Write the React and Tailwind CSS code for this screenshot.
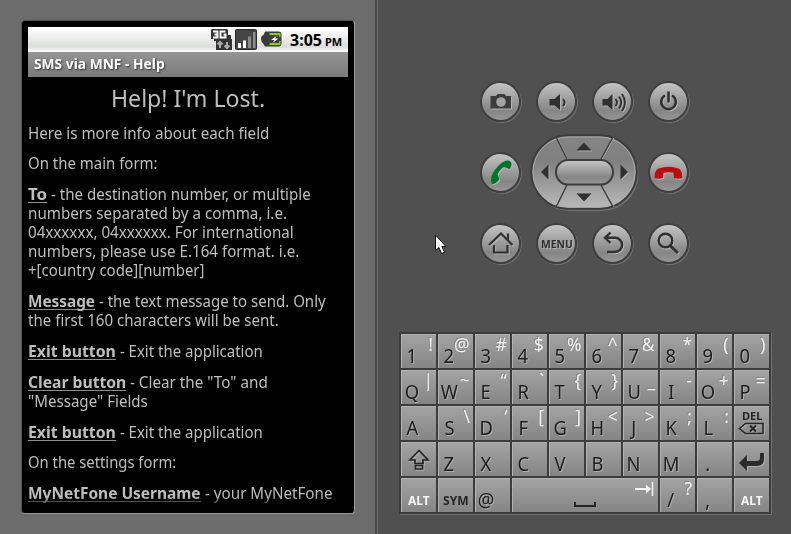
import React, { useLayoutEffect, useRef, useState } from "react";

// Text squeezed or stretched horizontally to an exact width.
function Fit({ w, className = "", children }) {
  const ref = useRef(null);
  const [scale, setScale] = useState(1);
  useLayoutEffect(() => {
    setScale(w / ref.current.offsetWidth);
  }, [w]);
  return (
    <span
      ref={ref}
      className={"inline-block w-max origin-left whitespace-pre " + className}
      style={{ transform: `scaleX(${scale})` }}
    >
      {children}
    </span>
  );
}

function Line({ term, termW, text, w }) {
  return (
    <div className="flex h-[19px]">
      {term && (
        <span className="flex h-[18px] shrink-0 border-b border-[#8f8f8f]" style={{ width: termW }}>
          <Fit w={termW} className="font-bold">{term}</Fit>
        </span>
      )}
      <Fit w={w}>{text}</Fit>
    </div>
  );
}

function StatusBar() {
  return (
    <div className="flex h-[25px] items-center bg-linear-to-b from-white via-[#dcdedc] via-80% to-white pl-[183px]">
      <svg width="72" height="24" viewBox="0 0 72 24">
        <path d="M1 1h15l1 1v5h3v4h1v11H5v-9H3v-2H0V2z" fill="#333" />
        <path d="M2 3.500h4.500v6H2M3.500 6.500h3M14.500 3.500H9.500v6h5v-3h-2" fill="none" stroke="#fff" strokeWidth="1.900" />
        <path d="M9 20v-5M6.500 16.500L9 14l2.500 2.500M16 14v5M13.500 17.500L16 20l2.500-2.500" fill="none" stroke="#aaa" strokeWidth="2" />
        <rect x="24.500" y="1.500" width="21" height="20" rx="1" fill="#454545" stroke="#2a2a2a" />
        <path d="M27 15h3v5h-3zM32 12.500h3V20h-3z" fill="#fff" />
        <path d="M37 8.500h3V20h-3zM42 4h2.500v16H42z" fill="#8b8b8b" />
        <path d="M54 3.500h13.500q3 0 3 3v9q0 3-3 3H54l-1.500-2.500q-2.500-1.500-2.500-5t2.500-4z" fill="#3b3d3b" />
        <path d="M58.500 5h10.500v2h-10.500zM58.500 15h10.500v2h-10.500zM68 5h1.500v4h-1.500zM68 13h1.500v4h-1.500z" fill="#8fd000" />
        <path d="M66 7.500l-6 4.500h3.500l-2 3 6-4.500h-3.500z" fill="#fff" />
      </svg>
      <span className="flex items-baseline pl-[7px] pt-[2px] font-bold text-black">
        <Fit w={32} className="text-[16px] leading-5">3:05</Fit>
        <Fit w={17} className="ml-[3px] text-[11px] leading-5">PM</Fit>
      </span>
    </div>
  );
}

function Phone() {
  return (
    <div className="flex h-[494px] w-[334px] flex-col overflow-hidden rounded-[4px] border border-t-[#555] border-r-[#999] border-b-[#999] border-l-[#555] bg-black p-[6px]">
      <StatusBar />
      <div className="flex h-[25px] items-center bg-linear-to-b from-[#959595] to-[#7a7a7a] pl-[6px] text-[14px] font-bold text-white [text-shadow:1px_1px_2px_#333]">
        <Fit w={131} className="-mt-[2px]">SMS via MNF - Help</Fit>
      </div>
      <div className="grid h-[430px] grid-cols-1 grid-rows-1 overflow-hidden text-[16px] leading-[19px] text-[#bebebe]">
        <div className="col-start-1 row-start-1 flex flex-col">
          <div className="flex h-[47px] pl-[83px] text-[24px] leading-[41px]">
            <Fit w={154}>Help! I'm Lost.</Fit>
          </div>
          <Line text="Here is more info about each field" w={241} />
          <div className="h-[11px]" />
          <Line text="On the main form:" w={130} />
          <div className="h-3" />
          <Line term="To" termW={19} text=" - the destination number, or multiple" w={264} />
          <Line text="numbers separated by a comma, i.e." w={259} />
          <Line text="04xxxxxx, 04xxxxxx. For international" w={266} />
          <Line text="numbers, please use E.164 format. i.e." w={271} />
          <Line text="+[country code][number]" w={176} />
          <div className="h-3" />
          <Line term="Message" termW={67} text=" - the text message to send. Only" w={231} />
          <Line text="the first 160 characters will be sent." w={251} />
          <div className="h-3" />
          <Line term="Exit button" termW={88} text=" - Exit the application" w={147} />
          <div className="h-3" />
          <Line term="Clear button" termW={98} text={' - Clear the "To" and'} w={142} />
          <Line text={'"Message" Fields'} w={120} />
          <div className="h-3" />
          <Line term="Exit button" termW={88} text=" - Exit the application" w={147} />
          <div className="h-[11px]" />
          <Line text="On the settings form:" w={148} />
          <div className="h-3" />
          <Line term="MyNetFone Username" termW={173} text=" - your MyNetFone" w={132} />
        </div>
        <div className="z-10 col-start-1 row-start-1 h-[10px] self-end bg-linear-to-b from-transparent to-black" />
      </div>
    </div>
  );
}

function Round({ children }) {
  return (
    <div className="flex size-[41px] items-center justify-center rounded-full border-2 border-[#3f3f3f] bg-linear-to-b from-[#c4c4c4] via-[#858585] via-75% to-[#979797] shadow-[1px_1px_0_#717171] [&>svg]:shrink-0 [&>svg]:drop-shadow-[1px_1px_0_#b5b5b5]">
      {children}
    </div>
  );
}

const S = { fill: "none", stroke: "#303030" };

function DPad() {
  return (
    <svg width="110" height="78" viewBox="530.500 134 110 78">
      <defs>
        <linearGradient id="pad" x1="0" y1="0" x2="0" y2="1">
          <stop offset="0" stopColor="#858585" />
          <stop offset="0.35" stopColor="#808080" />
          <stop offset="1" stopColor="#bababa" />
        </linearGradient>
        <linearGradient id="mid" x1="0" y1="0" x2="0" y2="1">
          <stop offset="0" stopColor="#c8c8c8" />
          <stop offset="0.7" stopColor="#868686" />
          <stop offset="1" stopColor="#979797" />
        </linearGradient>
      </defs>
      <rect x="533" y="136.500" width="106" height="74.500" rx="37" fill="#717171" />
      <rect x="531.800" y="135.300" width="105.500" height="73.500" rx="36.700" fill="url(#pad)" stroke="#3c3c3c" strokeWidth="2" />
      <rect x="533.500" y="137" width="102" height="70" rx="35" fill="none" stroke="#b0b0b0" strokeWidth="0.800" />
      <path d="M557.500 137.500L568.500 159.500M614.500 137.500L602.500 159.500M557.500 207L568.500 185M614.500 207L602.500 185" stroke="#a9a9a9" strokeWidth="1" />
      <path d="M556.500 137L567.500 159M613.500 137L601.500 159M556.500 207L567.500 185M613.500 207L601.500 185" stroke="#404040" strokeWidth="1.500" />
      <rect x="556.500" y="160" width="57" height="24.500" rx="12.200" fill="url(#mid)" stroke="#3c3c3c" strokeWidth="2" />
      <g fill="#b0b0b0">
        <path d="M578 151.500h15l-7.500-8zM578 194.500h15l-7.500 8zM550 165.500v15l-7.500-7.500zM622 165.500v15l7.500-7.500z" />
      </g>
      <path d="M577 150.500h15l-7.500-8zM577 193.500h15l-7.500 8zM549 164.500v15l-7.500-7.500zM621 164.500v15l7.500-7.500z" fill="#303030" />
    </svg>
  );
}

const HANDSET = "M-14 5Q-14-3-10-4.500Q0-8 10-4.500Q14-3 14 5Q10 6.500 5.500 5L5-.2Q0-1.500-5-.2L-5.500 5Q-10 6.500-14 5z";
const GREEN = "M29 8q1.500 4-1.500 7l-5.500-2q-4 2-6.500 7.500l2 4.500q-3 5-7.500 5q-2.500-5 1-11q5-8.500 11-11.500q4-2 7 .5z";

function Controls() {
  return (
    <div className="grid w-[209px] grid-cols-[41px_41px_41px_41px] grid-rows-[41px_41px_41px] gap-x-[15px] gap-y-[30px]">
      <Round>
        <svg width="38" height="38" viewBox="0 0 38 38">
          <path d="M8.500 13H14l1.500-2h7l1.500 2h5v12.500H8.500z" fill="#3d3d3d" />
          <circle cx="19" cy="19" r="4.800" fill="#a2a2a2" />
        </svg>
      </Round>
      <Round>
        <svg width="38" height="38" viewBox="0 0 38 38">
          <path d="M11.500 16h5l5.500-5v16l-5.500-4.500h-5z" fill="#303030" />
          <path d="M25 16q3 3.500 0 7" {...S} strokeWidth="1.900" />
        </svg>
      </Round>
      <Round>
        <svg width="38" height="38" viewBox="0 0 38 38">
          <path d="M8.500 16h5l5-5v16l-5-4.500h-5z" fill="#303030" />
          <path d="M21.500 16q3 3.500 0 7M25 13.500q4.500 6 0 12M28 11q6 8.500 0 17" {...S} strokeWidth="1.900" />
        </svg>
      </Round>
      <Round>
        <svg width="38" height="38" viewBox="0 0 38 38">
          <path d="M15 12.500A7.300 7.300 0 1 0 22 12.500M18.500 8.500v11" {...S} strokeWidth="2.500" />
        </svg>
      </Round>

      <Round>
        <svg width="38" height="38" viewBox="0 0 38 38">
          <path d={GREEN} fill="#00762a" />
        </svg>
      </Round>
      <div className="col-span-2 -mx-[6px] -mt-[18px] -mb-[19px]">
        <DPad />
      </div>
      <Round>
        <svg width="38" height="38" viewBox="0 0 38 38">
          <path d={HANDSET} transform="translate(18.500 19)" fill="#b90d12" />
        </svg>
      </Round>

      <Round>
        <svg width="38" height="38" viewBox="0 0 38 38">
          <path d="M7 20L19 8.500L30.500 20M26 14.500V8.500M12 20v7.500h13.500V20" {...S} strokeWidth="2.200" />
        </svg>
      </Round>
      <Round>
        <span className="flex w-[31px] shrink-0 text-[11px] font-bold leading-none text-[#303030] [text-shadow:1px_1px_0_#b0b0b0]">
          <Fit w={32}>MENU</Fit>
        </span>
      </Round>
      <Round>
        <svg width="38" height="38" viewBox="0 0 38 38">
          <path d="M16.500 7.500L11 12.800L16.500 18M11 12.800H21a7 7 0 0 1 0 14.200H13" {...S} strokeWidth="2.400" />
        </svg>
      </Round>
      <Round>
        <svg width="38" height="38" viewBox="0 0 38 38">
          <circle cx="15.500" cy="15.500" r="6.800" {...S} strokeWidth="2.400" />
          <path d="M20 20.500L28 28" {...S} strokeWidth="3" />
        </svg>
      </Round>
    </div>
  );
}

const ROWS = [
  ["1!", "2@", "3#", "4$", "5%", "6^", "7&", "8*", "9(", "0)"],
  ["Q|", "W~", "E“", "R`", "T{", "Y}", "U_", "I-", "O+", "P="],
  ["A", "S\\", "D‘", "F[", "G]", "H<", "J>", "K;", "L:"],
];

const KEY =
  "grid h-[34px] grid-cols-1 grid-rows-[33px] border-l border-t border-[#b2b2b2] bg-linear-to-b from-[#a3a3a3] to-[#858585]";

function Key({ chars }) {
  return (
    <div className={KEY}>
      <span className="col-start-1 row-start-1 w-[20px] self-start text-center text-[20px] leading-[41px] text-[#1e1e1e] [text-shadow:1px_1px_0_#adadad]">
        <span className="inline-block scale-x-[.92]">{chars[0]}</span>
      </span>
      {chars[1] && (
        <span className="col-start-1 row-start-1 justify-self-end pr-[3px] text-[18.5px] leading-[18px] text-[#f2f2f2] [text-shadow:-1px_-1px_0_#858585]">
          <span className="inline-block origin-right scale-x-[.94]">{chars[1]}</span>
        </span>
      )}
    </div>
  );
}

function Word({ children, w, className }) {
  return (
    <div className={KEY}>
      <span className={"flex pt-[12px] text-[13px] font-bold leading-[18px] " + className}>
        <Fit w={w}>{children}</Fit>
      </span>
    </div>
  );
}

const ICON = "drop-shadow-[1px_1px_0_#adadad] -ml-px -mt-px";

function Keyboard() {
  return (
    <div className="grid w-[372px] grid-cols-[35px_35px_35px_35px_35px_35px_35px_35px_35px_35px] gap-[2px] border-2 border-[#3c3c3c] bg-[#3c3c3c] shadow-[1px_1px_0_#717171]">
      {ROWS.flat().map((k) => (
        <Key key={k} chars={k} />
      ))}
      <div className={KEY}>
        <span className="col-start-1 row-start-1 flex pl-[7px] pt-[4px] text-[10px] font-bold leading-[10px] text-[#252525]">
          <Fit w={21}>DEL</Fit>
        </span>
        <svg className={"col-start-1 row-start-1 " + ICON} width="35" height="34" viewBox="0 0 35 34">
          <path d="M5.500 22.500l6-5H29v10H11.500z" fill="none" stroke="#252525" strokeWidth="1.600" />
          <path d="M16 19.500l6 6M22 19.500l-6 6" stroke="#252525" strokeWidth="2" />
        </svg>
      </div>
      <div className={KEY}>
        <svg className={ICON} width="35" height="34" viewBox="0 0 35 34">
          <path d="M18 8.500L9 18h5v3.500h8V18h5zM14.500 23.500h7V27h-7z" fill="none" stroke="#252525" strokeWidth="1.700" />
        </svg>
      </div>
      {["Z", "X", "C", "V", "B", "N", "M", "."].map((k) => (
        <Key key={k} chars={k} />
      ))}
      <div className={KEY}>
        <svg className={ICON} width="35" height="34" viewBox="0 0 35 34">
          <path d="M5 21L13 13v6h9.500q3.500 0 3.500-3.500V11h4v6q0 7-7 7H13v5z" fill="#2b2b2b" />
        </svg>
      </div>
      <Word w={22} className="pl-[6px] text-[#f5f5f5]">ALT</Word>
      <Word w={26} className="pl-[4px] text-[#252525]">SYM</Word>
      <Key chars="@" />
      <div className={KEY + " col-span-4"}>
        <svg className="-ml-px -mt-px" width="146" height="34" viewBox="0 0 146 34">
          <path d="M63 24v4h20v-4" fill="none" stroke="#252525" strokeWidth="2" />
          <path d="M123 11h13" fill="none" stroke="#f2f2f2" strokeWidth="2" />
          <path d="M134 6.500l5 4.500-5 4.500z" fill="#f2f2f2" />
          <path d="M140.500 4v14" stroke="#f2f2f2" strokeWidth="1.500" />
        </svg>
      </div>
      <Key chars="/?" />
      <Key chars="," />
      <Word w={22} className="pl-[6px] text-[#f5f5f5]">ALT</Word>
    </div>
  );
}

export default function App() {
  return (
    <div className="flex h-[534px] w-[791px] overflow-hidden bg-[#505050] font-['Noto_Sans','Open_Sans',sans-serif]">
      <div className="w-[375px] shrink-0 bg-[#6c6c6c] pl-[21px] pt-[20px]">
        <Phone />
      </div>
      <div className="w-[3px] shrink-0 border-r border-[#707070] bg-[#484848]" />
      <div className="relative flex w-[413px] flex-col pl-[21px] pt-[81px]">
        <div className="pl-[81px]">
          <Controls />
        </div>
        <div className="pt-[68px]">
          <Keyboard />
        </div>
        <svg className="absolute left-[56px] top-[234px]" width="14" height="22" viewBox="0 0 14 22">
          <path d="M1.500 1v15.500l3.500-3L7.500 19.500l3-1.200-2.700-5.800H12z" fill="#fff" stroke="#111" />
        </svg>
      </div>
    </div>
  );
}
